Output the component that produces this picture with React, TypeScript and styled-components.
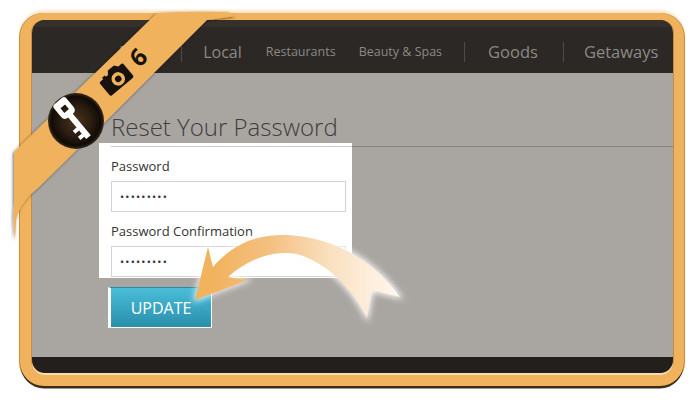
import styled, { createGlobalStyle } from "styled-components";

const GlobalStyle = createGlobalStyle`
  html, body {
    margin: 0;
    padding: 0;
    background: #fff;
    font-family: "Open Sans", "Liberation Sans", sans-serif;
  }
`;

interface NavItemProps {
  $size: number;
  $gap: number;
}

interface NavDividerProps {
  $offset: number;
}

const navItems = [
  { label: "Deals", size: 16, gap: 0, divider: 21 },
  { label: "Local", size: 16, gap: 21, divider: 0 },
  { label: "Restaurants", size: 12.5, gap: 24, divider: 0 },
  { label: "Beauty & Spas", size: 12.5, gap: 23, divider: 22 },
  { label: "Goods", size: 16.5, gap: 23, divider: 25 },
  { label: "Getaways", size: 16.5, gap: 20, divider: 0 },
];

const arrowPath =
  "M208 247 L213 267 C235 241 262 234 287 235 C335 237 375 262 400 297 L372 290 L367 318 C352 287 325 262 297 254 C270 249 245 262 228 277 L248 280 L195 300 Z";

function App() {
  return (
    <Page>
      <GlobalStyle />
      <Frame>
        <FrameInner>
          <Header>
            {navItems.map((item) => (
              <NavGroup key={item.label}>
                <NavItem $size={item.size} $gap={item.gap}>
                  {item.label}
                </NavItem>
                {item.divider > 0 && <NavDivider $offset={item.divider} />}
              </NavGroup>
            ))}
          </Header>
          <Content>
            <Title>Reset Your Password</Title>
            <FormPanel>
              <FieldLabel>Password</FieldLabel>
              <PasswordInput type="password" defaultValue="passwords" readOnly />
              <FieldLabel>Password Confirmation</FieldLabel>
              <PasswordInput type="password" defaultValue="passwords" readOnly />
            </FormPanel>
            <UpdateButton>UPDATE</UpdateButton>
          </Content>
          <Footer />
        </FrameInner>
      </Frame>

      <Overlay viewBox="0 0 700 407" aria-hidden="true">
        <defs>
          <radialGradient id="badge" cx="50%" cy="50%" r="50%">
            <stop offset="0%" stopColor="#4a3520" />
            <stop offset="55%" stopColor="#2a1c10" />
            <stop offset="88%" stopColor="#100b07" />
            <stop offset="100%" stopColor="#3a2b1c" />
          </radialGradient>
          <filter id="ribbonShadow" x="-20%" y="-20%" width="140%" height="140%">
            <feDropShadow dx="-1" dy="1" stdDeviation="1.5" floodColor="#000" floodOpacity="0.55" />
          </filter>
        </defs>
        <path
          d="M14 152 L157 13 Q190 11 227 12 Q232 13 236 16 L207 20 L100 127 L38 188 Q18 204 16 222 L15 240 Q13 225 14 205 Z"
          fill="#f0b25c"
          filter="url(#ribbonShadow)"
        />
        <circle cx="76" cy="121" r="28" fill="url(#badge)" />
        {/* key */}
        <g transform="translate(75 121) rotate(50)" fill="#fff">
          <path
            fillRule="evenodd"
            d="M-23 -8 H-12 Q-7 -8 -7 -3 V-3 H21 V3 H18 V8 H14 V3 H10 V8 H6 V3 H-7 V3 Q-7 8 -12 8 H-23 Q-26 8 -26 5 V-5 Q-26 -8 -23 -8 Z M-19 -3 V3 H-13 V-3 Z"
          />
        </g>
        {/* camera */}
        <g transform="translate(116 79) rotate(-40) scale(0.9)" fill="#17120d">
          <path
            fillRule="evenodd"
            d="M-15 -9 H-11 V-11 H-7 V-9 H-4 L-1 -13 H8 L11 -9 H15 Q17 -9 17 -7 V9 Q17 11 15 11 H-15 Q-17 11 -17 9 V-7 Q-17 -9 -15 -9 Z M2 -6 A7.5 7.5 0 1 0 2.01 9 A7.5 7.5 0 1 0 2 -6 Z"
          />
          <circle cx="2" cy="1.5" r="3.6" />
        </g>
      </Overlay>
      <PhotoCount>6</PhotoCount>

      <Overlay viewBox="0 0 700 407" aria-hidden="true">
        <defs>
          <linearGradient id="arrowFill" gradientUnits="userSpaceOnUse" x1="215" y1="0" x2="400" y2="0">
            <stop offset="0%" stopColor="#f2b35f" />
            <stop offset="30%" stopColor="#f4c081" />
            <stop offset="62%" stopColor="#f9e0bf" />
            <stop offset="100%" stopColor="#fff8ef" />
          </linearGradient>
          <linearGradient id="arrowGlow" gradientUnits="userSpaceOnUse" x1="215" y1="0" x2="400" y2="0">
            <stop offset="0%" stopColor="#fff" stopOpacity="0.75" />
            <stop offset="100%" stopColor="#fff" stopOpacity="1" />
          </linearGradient>
          <filter id="blurGlow" x="-20%" y="-20%" width="140%" height="140%">
            <feGaussianBlur stdDeviation="3" />
          </filter>
        </defs>
        <path
          d={arrowPath}
          fill="url(#arrowGlow)"
          stroke="url(#arrowGlow)"
          strokeWidth="3"
          filter="url(#blurGlow)"
        />
        <path d={arrowPath} fill="url(#arrowFill)" />
      </Overlay>
    </Page>
  );
}

export default App;

const Page = styled.div`
  position: relative;
  width: 700px;
  height: 407px;
  padding: 13px 0 0 20px;
  box-sizing: border-box;
  overflow: hidden;
`;

const Frame = styled.div`
  box-sizing: border-box;
  width: 664px;
  height: 373px;
  padding: 7px 11px 13px 12px;
  border-radius: 24px;
  background: #f0b25c;
  box-shadow:
    0 3px 0 -0.5px #3f2c16,
    1px 0 0 #c58d44,
    -1px 0 0 #c58d44,
    0 -3px 3px #fbe6c9;
`;

const FrameInner = styled.div`
  display: flex;
  flex-direction: column;
  height: 100%;
  border-radius: 13px;
  overflow: hidden;
  box-shadow:
    0 2px 0 #fbdcb2,
    1px 0 0 #c58d44,
    -1px 0 0 #c58d44;
`;

const Header = styled.div`
  display: flex;
  align-items: center;
  flex-shrink: 0;
  height: 53px;
  box-sizing: border-box;
  padding: 3px 0 0 87px;
  background: #2b2826;
  border-top: 7px solid #35302a;
`;

const NavGroup = styled.div`
  display: flex;
  align-items: center;
`;

const NavItem = styled.span<NavItemProps>`
  margin-left: ${(props) => props.$gap}px;
  font-size: ${(props) => props.$size}px;
  color: #8c8884;
  white-space: nowrap;
`;

const NavDivider = styled.span<NavDividerProps>`
  width: 1px;
  height: 20px;
  margin-left: ${(props) => props.$offset}px;
  background: #4f4b48;
`;

const Content = styled.div`
  flex: 1;
  display: flex;
  flex-direction: column;
  align-items: flex-start;
  background: #a9a5a1;
`;

const Title = styled.h1`
  position: relative;
  z-index: 1;
  align-self: stretch;
  box-sizing: border-box;
  height: 74px;
  margin: 0 0 0 79px;
  padding-top: 38px;
  border-bottom: 1px solid rgba(0, 0, 0, 0.2);
  font-size: 24px;
  font-weight: 300;
  line-height: 32px;
  color: #3f3d40;
`;

const FormPanel = styled.div`
  display: flex;
  flex-direction: column;
  box-sizing: border-box;
  width: 253px;
  height: 135px;
  margin: -4px 0 0 67px;
  padding: 14px 6px 0 12px;
  background: #fff;
`;

const FieldLabel = styled.label`
  flex-shrink: 0;
  height: 24px;
  font-size: 13px;
  line-height: 18px;
  color: #333;
`;

const PasswordInput = styled.input`
  box-sizing: border-box;
  flex-shrink: 0;
  width: 235px;
  height: 31px;
  margin-bottom: 10px;
  padding: 0 8px;
  border: 1px solid #d3d3d3;
  outline: none;
  background: #fff;
  font-family: "Open Sans", sans-serif;
  font-size: 11px;
  letter-spacing: 1.2px;
  color: #333;
`;

const UpdateButton = styled.button`
  width: 104px;
  height: 41px;
  margin: 9px 0 0 76px;
  padding: 0;
  box-sizing: border-box;
  border: solid #fff;
  border-width: 0 1px 1px 3px;
  border-top: 1px solid #2a8aa6;
  background: linear-gradient(#4abdd9, #2a8fab);
  font-family: "Open Sans", sans-serif;
  font-size: 16px;
  color: #fff;
`;

const Footer = styled.div`
  flex-shrink: 0;
  height: 16px;
  background: #221f1c;
`;

const Overlay = styled.svg`
  position: absolute;
  top: 0;
  left: 0;
  width: 700px;
  height: 407px;
  pointer-events: none;
`;

const PhotoCount = styled.span`
  position: absolute;
  top: 41px;
  left: 131px;
  font-size: 24px;
  line-height: 32px;
  font-weight: 700;
  color: #17120d;
  transform: rotate(-45deg);
`;
